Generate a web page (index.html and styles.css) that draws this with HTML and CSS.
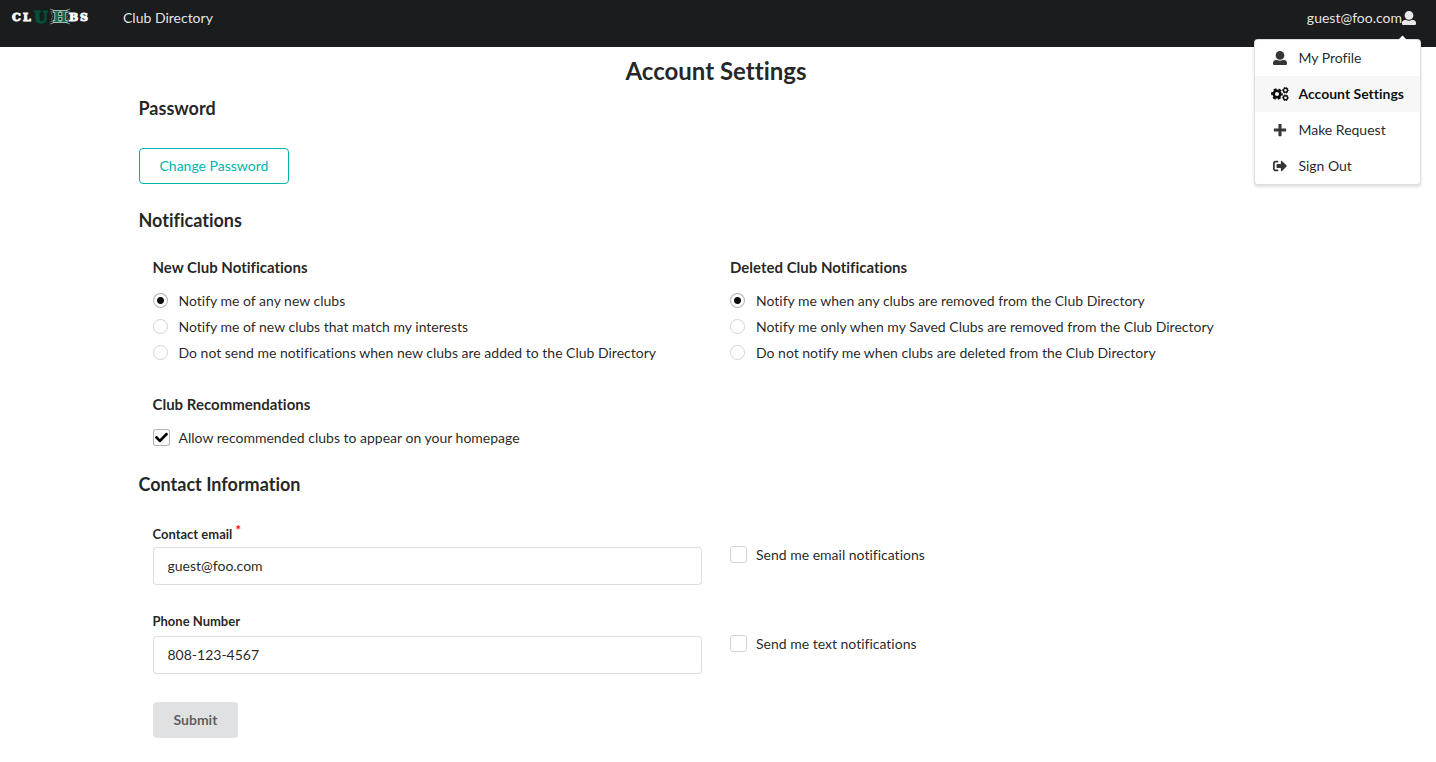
FILE: index.html
```html
<!DOCTYPE html>
<html lang="en">
<head>
<meta charset="utf-8">
<meta name="viewport" content="width=device-width, initial-scale=1">
<title>Account Settings</title>
<link rel="stylesheet" href="styles.css">
</head>
<body>
<header class="navbar">
  <a class="brand" href="#" aria-label="CLUHBS">
    <svg class="logo" viewBox="0 0 80 18" width="80" height="18">
      <g fill="none" stroke="#7f8c89" stroke-width="1">
        <path d="M38 0l6 2M38 15l6-2M58 0l-6 2M58 15l-6-2"/>
        <path d="M39 2l1.500 5.500L39 13M57 2l-1.500 5.500L57 13" stroke-dasharray="1.500 1"/>
      </g>
      <text class="logo-mark" x="22" y="14" font-size="16">U</text>
      <text class="logo-mark logo-mark-outline" x="41" y="13" font-size="15">H</text>
      <text class="logo-text" x="0 11" y="12">CL</text>
      <text class="logo-text" x="57 68" y="12">BS</text>
    </svg>
  </a>
  <nav class="nav-links"><a class="nav-link" href="#">Club Directory</a></nav>
  <div class="account">
    <button class="account-toggle" type="button" aria-expanded="true">
      <span>guest@foo.com</span>
      <svg class="icon" viewBox="0 0 512 512"><path d="M256 0c88.366 0 160 71.634 160 160s-71.634 160-160 160S96 248.366 96 160 167.634 0 256 0zm183.283 333.821l-71.313-17.828c-74.923 53.89-165.738 41.864-223.94 0l-71.313 17.828C29.981 344.505 0 382.903 0 426.955V464c0 26.510 21.490 48 48 48h416c26.510 0 48-21.490 48-48v-37.045c0-44.052-29.981-82.450-72.717-93.134z"/></svg>
    </button>
    <div class="menu">
      <a class="menu-item" href="#">
        <span class="menu-icon"><svg class="icon" viewBox="0 0 512 512"><path d="M256 0c88.366 0 160 71.634 160 160s-71.634 160-160 160S96 248.366 96 160 167.634 0 256 0zm183.283 333.821l-71.313-17.828c-74.923 53.89-165.738 41.864-223.94 0l-71.313 17.828C29.981 344.505 0 382.903 0 426.955V464c0 26.510 21.490 48 48 48h416c26.510 0 48-21.490 48-48v-37.045c0-44.052-29.981-82.450-72.717-93.134z"/></svg></span>
        My Profile
      </a>
      <a class="menu-item menu-item-active" href="#" aria-current="page">
        <span class="menu-icon"><svg class="icon icon-wide" viewBox="0 0 36 28" fill="none" stroke="currentColor">
          <circle cx="12" cy="14" r="6.500" stroke-width="5"/>
          <circle cx="12" cy="14" r="10" stroke-width="3.500" stroke-dasharray="6 4.472" stroke-dashoffset="3"/>
          <circle cx="29" cy="6.500" r="4" stroke-width="2.600"/>
          <circle cx="29" cy="6.500" r="5.700" stroke-width="2" stroke-dasharray="3.400 2.570" stroke-dashoffset="1.700"/>
          <circle cx="29" cy="21.500" r="4" stroke-width="2.600"/>
          <circle cx="29" cy="21.500" r="5.700" stroke-width="2" stroke-dasharray="3.400 2.570" stroke-dashoffset="1.700"/>
        </svg></span>
        Account Settings
      </a>
      <a class="menu-item" href="#">
        <span class="menu-icon"><svg class="icon" viewBox="-32 0 512 512"><path d="M432 200H280V48c0-9-7-16-16-16h-80c-9 0-16 7-16 16v152H16c-9 0-16 7-16 16v80c0 9 7 16 16 16h152v152c0 9 7 16 16 16h80c9 0 16-7 16-16V312h152c9 0 16-7 16-16v-80c0-9-7-16-16-16z"/></svg></span>
        Make Request
      </a>
      <a class="menu-item" href="#">
        <span class="menu-icon"><svg class="icon" viewBox="0 0 512 512"><path d="M497 273L329 441c-15 15-41 4.500-41-17v-96H152c-13.300 0-24-10.700-24-24v-96c0-13.300 10.700-24 24-24h136V88c0-21.400 25.900-32 41-17l168 168c9.300 9.400 9.300 24.600 0 34zM192 436v-40c0-6.600-5.400-12-12-12H96c-17.700 0-32-14.300-32-32V160c0-17.700 14.300-32 32-32h84c6.600 0 12-5.400 12-12V76c0-6.600-5.400-12-12-12H96c-53 0-96 43-96 96v192c0 53 43 96 96 96h84c6.600 0 12-5.400 12-12z"/></svg></span>
        Sign Out
      </a>
    </div>
  </div>
</header>

<main class="page">
  <div class="container">
    <h1 class="page-title">Account Settings</h1>

    <section class="section">
      <h2 class="section-title">Password</h2>
      <button class="button button-outline" type="button">Change Password</button>
    </section>

    <form class="settings">
      <section class="section">
        <h2 class="section-title">Notifications</h2>
        <div class="columns">
          <fieldset class="group">
            <legend class="group-title">New Club Notifications</legend>
            <div class="options">
              <label class="option"><input class="radio" type="radio" name="new-clubs" checked>Notify me of any new clubs</label>
              <label class="option"><input class="radio" type="radio" name="new-clubs">Notify me of new clubs that match my interests</label>
              <label class="option"><input class="radio" type="radio" name="new-clubs">Do not send me notifications when new clubs are added to the Club Directory</label>
            </div>
          </fieldset>
          <fieldset class="group">
            <legend class="group-title">Deleted Club Notifications</legend>
            <div class="options">
              <label class="option"><input class="radio" type="radio" name="deleted-clubs" checked>Notify me when any clubs are removed from the Club Directory</label>
              <label class="option"><input class="radio" type="radio" name="deleted-clubs">Notify me only when my Saved Clubs are removed from the Club Directory</label>
              <label class="option"><input class="radio" type="radio" name="deleted-clubs">Do not notify me when clubs are deleted from the Club Directory</label>
            </div>
          </fieldset>
          <fieldset class="group">
            <legend class="group-title">Club Recommendations</legend>
            <label class="option"><input class="checkbox" type="checkbox" checked>Allow recommended clubs to appear on your homepage</label>
          </fieldset>
        </div>
      </section>

      <section class="section">
        <h2 class="section-title">Contact Information</h2>
        <div class="columns columns-contact">
          <div class="field">
            <label class="field-label" for="email">Contact email <span class="required">*</span></label>
            <input class="input" id="email" type="email" value="guest@foo.com" required>
          </div>
          <label class="option"><input class="checkbox" type="checkbox">Send me email notifications</label>
          <div class="field">
            <label class="field-label" for="phone">Phone Number</label>
            <input class="input" id="phone" type="tel" value="808-123-4567">
          </div>
          <label class="option"><input class="checkbox" type="checkbox">Send me text notifications</label>
          <div><button class="button button-submit" type="submit">Submit</button></div>
        </div>
      </section>
    </form>
  </div>
</main>
</body>
</html>
```

FILE: styles.css
```css
* { box-sizing: border-box; }

body {
  margin: 0;
  background: #fff;
  color: rgba(0, 0, 0, 0.87);
  font: 14px/18px Lato, "Liberation Sans", sans-serif;
  font-variant-ligatures: none;
}

a { color: inherit; text-decoration: none; }

button, input { font: inherit; }

/* Top bar */
.navbar {
  display: flex;
  align-items: flex-start;
  min-height: 47px;
  padding: 9px 20px 0 12px;
  background: #1b1c1d;
  color: rgba(255, 255, 255, 0.9);
}

.brand { display: block; margin-right: 31px; }

.logo { display: block; overflow: visible; }

.logo-text {
  fill: #fff;
  stroke: #fff;
  stroke-width: 1px;
  font: bold 11px "DejaVu Serif", serif;
}

.logo-mark {
  fill: #005238;
  stroke: #005238;
  stroke-width: 1px;
  font-family: "DejaVu Serif", serif;
  font-weight: bold;
}

.logo-mark-outline {
  fill: #0a6b4a;
  stroke: #a9b8b3;
  stroke-width: 2px;
  paint-order: stroke;
}

.nav-links { flex: 1; }

.account { position: relative; }

.account-toggle {
  display: flex;
  align-items: center;
  padding: 0;
  border: 0;
  background: none;
  color: inherit;
  cursor: pointer;
}

.icon {
  display: block;
  width: 14px;
  height: 14px;
  fill: currentColor;
}

.icon-wide { width: 18px; fill: none; }

.menu {
  position: absolute;
  top: 30px;
  right: -5px;
  z-index: 10;
  padding: 0;
  border: 1px solid rgba(34, 36, 38, 0.15);
  border-radius: 4px;
  background: #fff;
  box-shadow: 0 2px 3px rgba(34, 36, 38, 0.15);
  color: rgba(0, 0, 0, 0.87);
  white-space: nowrap;
}

.menu::before {
  content: "";
  position: absolute;
  top: -3px;
  right: 14px;
  width: 7px;
  height: 7px;
  background: #fff;
  transform: rotate(45deg);
}

.menu-item {
  position: relative;
  display: flex;
  align-items: center;
  gap: 9px;
  height: 36px;
  padding: 0 16px;
}

.menu-item-active {
  background: #f7f7f7;
  color: rgba(0, 0, 0, 0.95);
  font-weight: bold;
}

.menu-icon {
  display: flex;
  justify-content: center;
  width: 18px;
  opacity: 0.9;
}

.menu-item-active .menu-icon { opacity: 1; }

/* Page */
.page { padding: 8px 4px 24px 0; }

.container { max-width: 1155px; margin: 0 auto; }

.page-title {
  margin: 0 0 11px;
  font-size: 24px;
  line-height: 31px;
  text-align: center;
}

.section { margin-bottom: 25px; }

.section-title {
  margin: 0 0 28px;
  font-size: 18px;
  line-height: 23px;
}

.settings .section { margin-bottom: 27px; }

.settings .section-title { margin-bottom: 26px; }

.button {
  height: 36px;
  padding: 0 20px;
  border: 0;
  border-radius: 4px;
  cursor: pointer;
}

.button-outline {
  border: 1px solid #00b5ad;
  background: none;
  color: #00b5ad;
}

.button-submit {
  padding: 0 21px;
  background: #e0e1e2;
  color: rgba(0, 0, 0, 0.6);
  font-weight: bold;
}

.columns {
  display: grid;
  grid-template-columns: 1fr 1fr;
  gap: 34px 28px;
  padding: 0 14px;
}

.columns-contact { row-gap: 28px; align-items: center; padding-top: 2px; }

.group { min-width: 0; margin: 0; padding: 0; border: 0; }

.group-title {
  margin-bottom: 15px;
  padding: 0;
  font-size: 15px;
  font-weight: bold;
  line-height: 19px;
}

.options { display: grid; gap: 9px; }

.option { display: flex; align-items: center; gap: 9px; line-height: 17px; }

.radio, .checkbox {
  flex: none;
  width: 17px;
  height: 17px;
  margin: 0;
  border: 1px solid #d4d4d5;
  border-radius: 3px;
  appearance: none;
  background: #fff center / 13px 13px no-repeat;
}

.radio {
  width: 15px;
  height: 15px;
  margin-right: 2px;
  border-radius: 50%;
}

.radio:checked {
  border-color: rgba(34, 36, 38, 0.35);
  background: radial-gradient(circle, rgba(0, 0, 0, 0.95) 3px, transparent 4px);
}

.checkbox:checked {
  border-color: rgba(34, 36, 38, 0.35);
  background-image: url("data:image/svg+xml,%3Csvg xmlns='http://www.w3.org/2000/svg' viewBox='0 0 512 512'%3E%3Cpath d='M174 439L7 273c-10-10-10-26 0-36l36-36c10-10 26-10 36 0l113 112L432 73c10-10 26-10 36 0l36 36c10 10 10 26 0 36L210 439c-10 10-26 10-36 0z'/%3E%3C/svg%3E");
}

.field { display: grid; grid-template-rows: 18px 38px; gap: 5px; }

.field-label {
  font-size: 13px;
  font-weight: bold;
  line-height: 17px;
}

.required { color: #f00; line-height: 1; vertical-align: 4px; }

.input {
  width: 100%;
  padding: 0 14px;
  border: 1px solid rgba(34, 36, 38, 0.15);
  border-radius: 4px;
  background: #fff;
  color: inherit;
}
```
